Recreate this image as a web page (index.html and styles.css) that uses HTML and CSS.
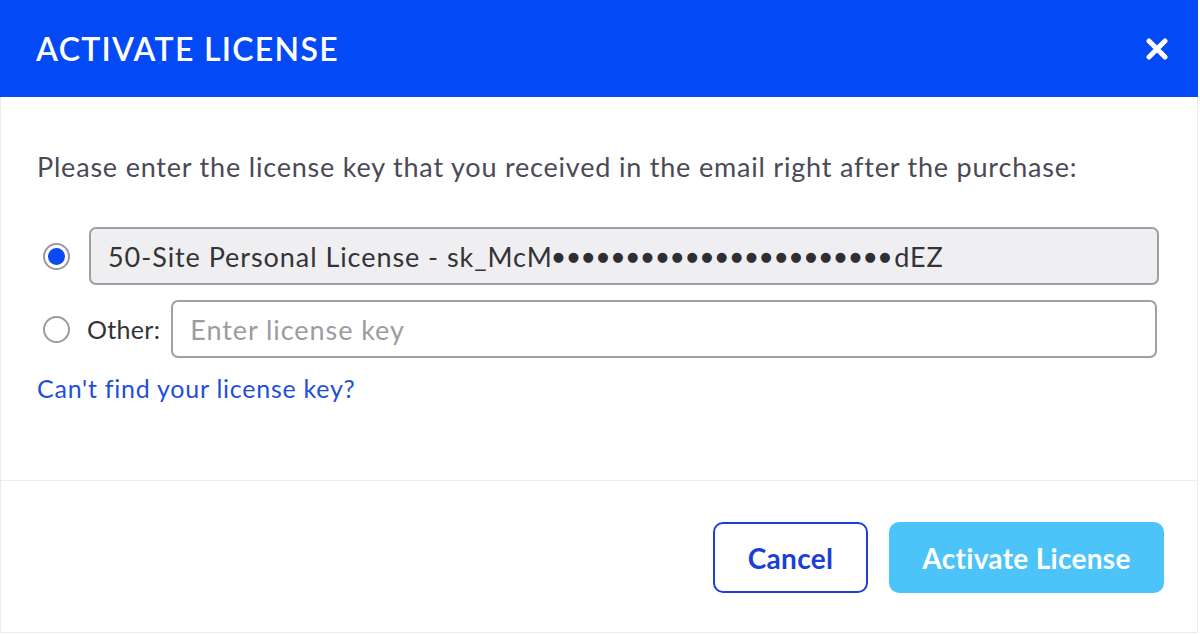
FILE: index.html
```html
<!DOCTYPE html>
<html>
<head>
<meta charset="utf-8">
<link rel="stylesheet" href="styles.css">
</head>
<body>
<div class="dialog">
  <div class="header">
    <h1 class="title">ACTIVATE LICENSE</h1>
    <span class="close" aria-label="Close">
      <svg width="22" height="22" viewBox="0 0 22 22"><path d="M3 3 L19 19 M19 3 L3 19" stroke="#fff" stroke-width="5" stroke-linecap="round"/></svg>
    </span>
  </div>
  <div class="content">
    <p class="intro">Please enter the license key that you received in the email right after the purchase:</p>
    <div class="row">
      <span class="radio checked"></span>
      <div class="field filled">50-Site Personal License - sk_McM<span class="dots">●●●●●●●●●●●●●●●●●●●●●●●</span>dEZ</div>
    </div>
    <div class="row">
      <span class="radio"></span>
      <span class="label">Other:</span>
      <div class="field empty">Enter license key</div>
    </div>
    <a class="link" href="#">Can't find your license key?</a>
  </div>
  <div class="footer">
    <button class="btn cancel">Cancel</button>
    <button class="btn primary">Activate License</button>
  </div>
</div>
</body>
</html>
```
FILE: styles.css
```css
html, body {
  margin: 0;
  padding: 0;
  background: #ffffff;
}
body {
  font-family: "Lato", "Noto Sans", sans-serif;
}
.dialog {
  width: 1198px;
  height: 633px;
  box-sizing: border-box;
  border: 1px solid #ececef;
  border-top: none;
  display: flex;
  flex-direction: column;
}
.header {
  height: 97px;
  flex: none;
  background: #0349f6;
  display: flex;
  align-items: center;
  justify-content: space-between;
  padding: 0 30px 0 36px;
  margin: 0 -1px;
}
.title {
  margin: 0;
  color: #ffffff;
  font-size: 32px;
  font-weight: 600;
  letter-spacing: 1.3px;
}
.close {
  display: flex;
  width: 22px;
  height: 22px;
}
.content {
  flex: 1;
  padding: 52px 36px 0 36px;
  border-bottom: 1px solid #ececef;
}
.intro {
  margin: 0 0 42px 0;
  font-size: 27px;
  line-height: 36px;
  letter-spacing: 0.8px;
  color: #4a4a57;
}
.row {
  display: flex;
  align-items: center;
  margin-bottom: 15px;
}
.radio {
  width: 23px;
  height: 23px;
  border: 2px solid #9a9a9f;
  border-radius: 50%;
  box-sizing: content-box;
  margin-left: 6px;
  margin-right: 19px;
  flex: none;
  position: relative;
  background: #fff;
}
.radio.checked::after {
  content: "";
  position: absolute;
  left: 3px;
  top: 3px;
  width: 17px;
  height: 17px;
  border-radius: 50%;
  background: #0a4af0;
}
.label {
  font-size: 25px;
  letter-spacing: 0.3px;
  color: #333338;
  margin-left: -2px;
  margin-right: 11px;
}
.field {
  flex: 1;
  height: 58px;
  box-sizing: border-box;
  border: 2px solid #a0a0a4;
  border-radius: 7px;
  display: flex;
  align-items: center;
  padding-left: 17px;
  font-size: 27px;
  letter-spacing: 0.94px;
  white-space: nowrap;
}
.field.filled {
  background: #efeff1;
  color: #333338;
  margin-right: 2px;
}
.field.empty {
  background: #ffffff;
  color: #9c9ca2;
  margin-right: 4px;
}
.dots {
  font-family: "DejaVu Sans", sans-serif;
  font-size: 13px;
  letter-spacing: 3.5px;
  color: #2e2e33;
}
.link {
  display: inline-block;
  font-size: 25px;
  letter-spacing: 0.75px;
  color: #1f4fd6;
  text-decoration: none;
}
.footer {
  height: 151px;
  flex: none;
  box-sizing: border-box;
  display: flex;
  align-items: flex-start;
  justify-content: flex-end;
  gap: 21px;
  padding: 41px 33px 0 0;
}
.btn {
  height: 71px;
  border-radius: 10px;
  font-family: "Lato", "Noto Sans", sans-serif;
  font-size: 28px;
  font-weight: 700;
  letter-spacing: 0.3px;
  box-sizing: border-box;
  cursor: pointer;
}
.cancel {
  width: 155px;
  background: #fff;
  border: 2px solid #1c3fd7;
  color: #1c3fd7;
}
.primary {
  width: 275px;
  background: #4cc4fa;
  border: none;
  color: #ffffff;
}
```
